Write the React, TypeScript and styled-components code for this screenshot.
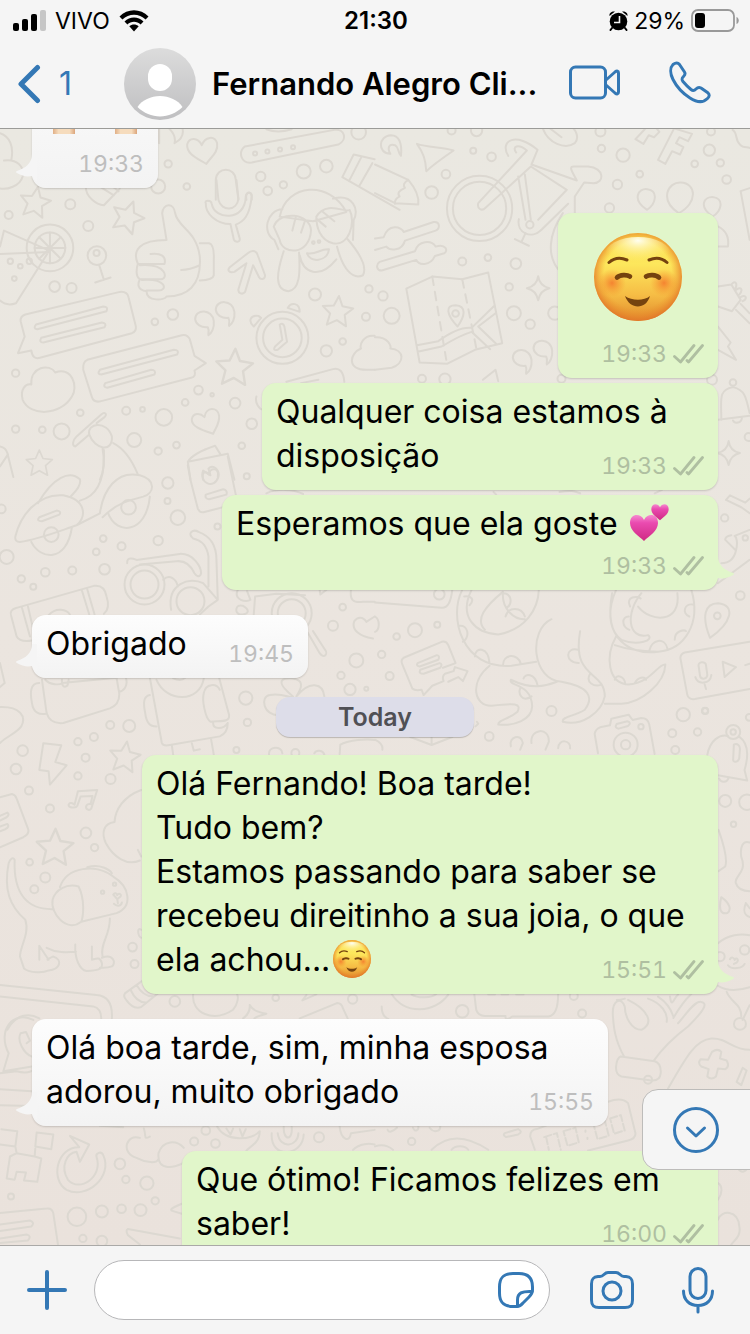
import React from "react";
import styled, { createGlobalStyle, css } from "styled-components";

const BLUE = "#3478b5";
const GREEN = "#e1f6ca";

const GlobalStyle = createGlobalStyle`
  * { box-sizing: border-box; }
  body {
    margin: 0;
    background: #f5f5f5;
    font-family: Inter, "Liberation Sans", sans-serif;
    color: #000;
  }
  button {
    margin: 0;
    padding: 0;
    border: 0;
    background: none;
    color: inherit;
    font: inherit;
    cursor: pointer;
  }
  svg { display: block; }
`;

const Screen = styled.div`
  display: flex;
  flex-direction: column;
  height: 100vh;
  overflow: hidden;
`;

/* ---------- top bars ---------- */

const Header = styled.header`
  flex: none;
  background: #f5f5f5;
  border-bottom: 1px solid #9b9b98;
`;

const StatusBar = styled.div`
  display: grid;
  grid-template-columns: 1fr auto 1fr;
  align-items: center;
  height: 40px;
  padding: 1px 11px 0 13px;
  font-size: 23px;
  line-height: 24px;
`;

const StatusGroup = styled.div<{ $end?: boolean }>`
  display: flex;
  align-items: center;
  justify-content: ${(p) => (p.$end ? "flex-end" : "flex-start")};
  gap: ${(p) => (p.$end ? "6px" : "9px")};
`;

const Clock = styled.time`
  font-size: 24px;
  font-weight: 600;
`;

const NavBar = styled.div`
  display: flex;
  align-items: center;
  height: 88px;
  padding: 0 39px 0 17px;
`;

const BackButton = styled.button`
  display: flex;
  align-items: center;
  gap: 17px;
  width: 107px;
  color: ${BLUE};
  font-size: 32px;
  line-height: 40px;
`;

const ContactName = styled.h1`
  flex: 1;
  min-width: 0;
  margin: 0 16px;
  overflow: hidden;
  white-space: nowrap;
  font-size: 31px;
  font-weight: 600;
  line-height: 40px;
`;

const IconButton = styled.button<{ $gap?: number }>`
  flex: none;
  margin-left: ${(p) => p.$gap ?? 0}px;
  color: ${BLUE};
`;

/* ---------- conversation ---------- */

const Chat = styled.main`
  position: relative;
  flex: 1;
  min-height: 0;
  overflow: hidden;
  background: linear-gradient(#eae8e1, #ebe5df 45%, #eae2dc);
`;

const WallpaperSvg = styled.svg`
  position: absolute;
  inset: 0;
  width: 100%;
  height: 100%;
  fill: none;
  stroke: #dcd8d1;
  stroke-width: 6;
  stroke-linecap: round;
  stroke-linejoin: round;
`;

const MessageList = styled.div`
  position: relative;
  display: flex;
  flex-direction: column;
  margin-top: -106px;
  padding: 0 32px;
`;

const Bubble = styled.article<{ $out?: boolean; $width: number; $gap?: number }>`
  position: relative;
  display: flex;
  flex-direction: column;
  flex: none;
  align-self: ${(p) => (p.$out ? "flex-end" : "flex-start")};
  width: ${(p) => p.$width}px;
  max-width: 100%;
  margin-top: ${(p) => p.$gap ?? 0}px;
  padding: 7px 14px 12px;
  border-radius: 14px;
  box-shadow: 0 1px 2px rgba(0, 0, 0, 0.16);
  ${(p) =>
    p.$out
      ? css`
          background: ${GREEN};
          --meta: #afbfa1;
        `
      : css`
          background: linear-gradient(#fdfdfd, #f3f3f3);
          --meta: #bebebe;
        `}
`;

const Line = styled.p`
  margin: 0;
  font-size: 32px;
  line-height: 44px;

  svg {
    display: inline-block;
    margin: -4px 0 -4px 3px;
    vertical-align: -3px;
  }
`;

const LastRow = styled.div`
  display: flex;
  align-items: flex-end;
  justify-content: space-between;
`;

const BigEmoji = styled.div`
  display: flex;
  justify-content: center;
  height: 114px;
  padding-top: 13px;
`;

const Meta = styled.footer<{ $below?: boolean }>`
  display: flex;
  align-items: center;
  align-self: flex-end;
  gap: 6px;
  margin-top: ${(p) => (p.$below ? 8 : 0)}px;
  color: var(--meta);
  font-size: 23px;
  font-variant-numeric: tabular-nums;
  line-height: 24px;
`;

const TailSvg = styled.svg<{ $out?: boolean }>`
  position: absolute;
  bottom: 6px;
  ${(p) =>
    p.$out
      ? css`
          right: -17px;
          fill: ${GREEN};
        `
      : css`
          left: -17px;
          fill: #f5f5f5;
          transform: scaleX(-1);
        `}
`;

const DatePill = styled.div`
  flex: none;
  align-self: center;
  width: 198px;
  margin: 19px 0 18px;
  border-radius: 14px;
  background: #dddde9;
  box-shadow: 0 1px 1px rgba(0, 0, 0, 0.2);
  color: #505055;
  font-size: 25px;
  font-weight: 600;
  line-height: 40px;
  text-align: center;
`;

const JumpButton = styled.button`
  position: absolute;
  right: -1px;
  bottom: 75px;
  display: flex;
  align-items: center;
  width: 109px;
  height: 81px;
  padding-left: 29px;
  border: 1px solid #bdbcba;
  border-radius: 16px 0 0 16px;
  background: #f5f5f5;
  color: ${BLUE};
`;

/* ---------- composer ---------- */

const Composer = styled.form`
  display: flex;
  flex: none;
  align-items: center;
  height: 89px;
  padding: 0 35px 0 26px;
  border-top: 1px solid #aaa9a7;
  background: #f5f5f5;
`;

const Field = styled.div`
  display: flex;
  flex: 1;
  align-items: center;
  min-width: 0;
  height: 60px;
  margin-left: 26px;
  padding: 0 14px 0 28px;
  border: 1px solid #b7b7b9;
  border-radius: 30px;
  background: #fff;
`;

const MessageInput = styled.input`
  flex: 1;
  min-width: 0;
  height: 44px;
  padding: 0;
  border: 0;
  outline: 0;
  background: transparent;
  font: 32px Inter, "Liberation Sans", sans-serif;
`;

/* ---------- icons ---------- */

const stroke = (w: number) => ({
  fill: "none",
  stroke: "currentColor",
  strokeWidth: w,
  strokeLinecap: "round" as const,
  strokeLinejoin: "round" as const,
});

const SignalIcon = () => (
  <svg width="33" height="21" viewBox="0 0 33 21" aria-label="Signal">
    <rect x="0" y="13" width="6" height="8" rx="2" />
    <rect x="9" y="9" width="6" height="12" rx="2" />
    <rect x="18" y="4" width="6" height="17" rx="2" />
    <rect x="27" y="0" width="6" height="21" rx="2" fill="#c6c6c6" />
  </svg>
);

const WifiIcon = () => (
  <svg width="30" height="22" viewBox="0 0 30 22" aria-label="Wi-Fi">
    <path d="M0.5 6.5C8.5-1.8 21.500-1.800 29.500 6.500L26.600 9.500C20.200 3 9.800 3 3.400 9.500Z" />
    <path d="M5.500 11.500C10.800 6.200 19.200 6.200 24.500 11.500L21.600 14.400C18 10.800 12 10.800 8.400 14.400Z" />
    <path d="M10.300 16.300C13 13.900 17 13.900 19.700 16.300L15 21.500Z" />
  </svg>
);

const AlarmIcon = () => (
  <svg width="19" height="20" viewBox="0 0 19 20" aria-label="Alarm">
    <path d="M3 17L1.500 19M16 17L17.500 19" {...stroke(2)} />
    <circle cx="9.500" cy="10.500" r="8.800" />
    <path d="M0.500 5C0 1.500 3 0 6 0.500ZM18.500 5C19 1.500 16 0 13 0.500Z" />
    <path d="M10.500 5V11.500H5" fill="none" stroke="#f5f5f5" strokeWidth="1.600" />
  </svg>
);

const BatteryIcon = () => (
  <svg width="48" height="23" viewBox="0 0 48 23" aria-label="Battery">
    <rect x="1" y="1" width="42" height="21" rx="6" fill="none" stroke="#999" strokeWidth="1.800" />
    <rect x="4" y="4" width="10" height="15" rx="3" />
    <path d="M45.500 8C48.500 9 48.500 14 45.500 15Z" fill="#999" />
  </svg>
);

const BackIcon = () => (
  <svg width="25" height="40" viewBox="0 0 25 40">
    <path d="M20.500 3.500L4 20L20.500 36.500" {...stroke(5)} />
  </svg>
);

const Avatar = () => (
  <svg width="72" height="72" viewBox="0 0 72 72" role="img" aria-label="Contact picture">
    <defs>
      <linearGradient id="avatar" x1="0" y1="0" x2="0" y2="1">
        <stop offset="0" stopColor="#dcdcdc" />
        <stop offset="1" stopColor="#bfbfc1" />
      </linearGradient>
    </defs>
    <circle cx="36" cy="36" r="36" fill="url(#avatar)" />
    <rect x="24" y="16" width="24" height="27" rx="12" fill="#fff" />
    <path d="M13.500 59C18 52 27 48 36 48C45 48 54 52 58.500 59C46 71.500 26 71.500 13.500 59Z" fill="#fff" />
  </svg>
);

const VideoIcon = () => (
  <svg width="52" height="38" viewBox="0 0 52 38">
    <g {...stroke(3)}>
      <rect x="1.500" y="2" width="35" height="31" rx="5" />
      <path d="M37 15L46 7C48 5.500 49.500 6 49.500 8V27C49.500 29 48 29.500 46 28L37 20" />
    </g>
  </svg>
);

const PhoneIcon = () => (
  <svg width="42" height="46" viewBox="0 0 42 46">
    <path
      d="M4 3.500C6 2 8.500 1 10.500 3.500L15.500 11C16.500 12.500 16 14 14.500 15.500C12.500 17.500 12.500 18.500 14 20.500C16.500 23.500 19 26 22 28.500C24 30 25 30 27 28C28.500 26.500 30 26 32 27L38.500 31.500C41 33.500 40.500 35.500 38.500 37.500C34.500 41.500 28 41.500 21 37C14 32.500 7.500 25.500 4 18.500C1 12.500 1 6.500 4 3.500Z"
      {...stroke(3)}
    />
  </svg>
);

const ChecksIcon = () => (
  <svg width="31" height="20" viewBox="0 0 31 20" aria-label="Delivered">
    <path d="M1.500 12.500L7.500 18L21 1.500M14 16.500L15.500 18L29.500 1.500" {...stroke(2.8)} />
  </svg>
);

const JumpIcon = () => (
  <svg width="48" height="48" viewBox="0 0 48 48">
    <g {...stroke(3)}>
      <circle cx="24" cy="24" r="21.500" />
      <path d="M15.500 22L24 30L32.500 22" />
    </g>
  </svg>
);

const PlusIcon = () => (
  <svg width="42" height="42" viewBox="0 0 42 42">
    <path d="M21 3V39M3 21H39" {...stroke(4)} />
  </svg>
);

const StickerIcon = () => (
  <svg width="38" height="38" viewBox="0 0 38 38">
    <g {...stroke(3)}>
      <path d="M20 35.500H16C6 35.500 2.500 31 2.500 22V16C2.500 6 7 2.500 16 2.500H22C31.500 2.500 35.500 7 35.500 16V19C35.500 22 34 24 32 26L26 32C24 34.500 22.500 35.500 20 35.500Z" />
      <path d="M35 20.500C25 20 20.500 22 20.500 29V35" />
    </g>
  </svg>
);

const CameraIcon = () => (
  <svg width="46" height="40" viewBox="0 0 46 40">
    <g {...stroke(3)}>
      <path d="M9 6.500H11C15 6.500 15 2.500 19 2.500H27C31 2.500 31 6.500 35 6.500H37C42 7 43.500 9 43.500 14V30C43.500 35.500 41.500 37.500 36 37.500H10C4.500 37.500 2.500 35.500 2.500 30V14C2.500 9 4 7 9 6.500Z" />
      <circle cx="23" cy="21" r="9" />
    </g>
  </svg>
);

const MicIcon = () => (
  <svg width="34" height="48" viewBox="0 0 34 48">
    <g {...stroke(3)}>
      <rect x="9" y="2.500" width="16" height="30" rx="8" />
      <path d="M2.500 25C2.500 34 8.500 39.500 17 39.500C25.500 39.500 31.500 34 31.500 25M17 40V46" />
    </g>
  </svg>
);

const Tail = ({ out }: { out?: boolean }) => (
  <TailSvg $out={out} width="22" height="28" viewBox="0 0 22 28">
    <path d="M0 0H5C5 9 11 14 20 17Q22 18 20 19C15 22 10 23 5 22L0 28Z" />
  </TailSvg>
);

const BlushEmoji = ({ size, id }: { size: number; id: string }) => (
  <svg width={size} height={size} viewBox="0 0 88 88" role="img" aria-label="Smiling face">
    <defs>
      <linearGradient id={`${id}-base`} x1="0" y1="0" x2="0" y2="1">
        <stop offset="0" stopColor="#fbdc4e" />
        <stop offset="0.350" stopColor="#fde75c" />
        <stop offset="0.700" stopColor="#f6bd45" />
        <stop offset="1" stopColor="#e08a2c" />
      </linearGradient>
      <radialGradient id={`${id}-rim`} cx="0.500" cy="0.480" r="0.520">
        <stop offset="0.740" stopColor="#ee962c" stopOpacity="0" />
        <stop offset="1" stopColor="#e2762a" stopOpacity="0.900" />
      </radialGradient>
      <radialGradient id={`${id}-shine`} cx="0.500" cy="0.100" r="0.600">
        <stop offset="0" stopColor="#fffef0" />
        <stop offset="1" stopColor="#fff27a" stopOpacity="0" />
      </radialGradient>
      <radialGradient id={`${id}-cheek`}>
        <stop offset="0" stopColor="#f4772c" stopOpacity="0.850" />
        <stop offset="1" stopColor="#f4932c" stopOpacity="0" />
      </radialGradient>
    </defs>
    <circle cx="44" cy="44" r="44" fill={`url(#${id}-base)`} />
    <circle cx="44" cy="44" r="44" fill={`url(#${id}-rim)`} />
    <ellipse cx="44" cy="22" rx="33" ry="18" fill={`url(#${id}-shine)`} />
    <circle cx="18" cy="50" r="14" fill={`url(#${id}-cheek)`} />
    <circle cx="70" cy="50" r="14" fill={`url(#${id}-cheek)`} />
    <g fill="none" stroke="#75430f" strokeLinecap="round">
      <path d="M15 29.500C20 25 27 24.500 33 27M73 29.500C68 25 61 24.500 55 27" strokeWidth="3" />
      <path d="M23 44.500C26 41.500 33 41.500 36 43.500M65 44.500C62 41.500 55 41.500 52 43.500" strokeWidth="4.600" />
    </g>
    <path d="M31 63C38 68 50 68 56 63C52 77 36 77 31 63Z" fill="#75430f" />
  </svg>
);

const HEART = "M0 -6C-3 -13 -14 -13 -14 -3C-14 5 -5 10 0 15C5 10 14 5 14 -3C14 -13 3 -13 0 -6Z";

const HeartsEmoji = () => (
  <svg width="40" height="40" viewBox="0 0 40 40" role="img" aria-label="Two hearts">
    <defs>
      <linearGradient id="heart" x1="0" y1="0" x2="0" y2="1">
        <stop offset="0" stopColor="#f58bd0" />
        <stop offset="0.300" stopColor="#ea4bb0" />
        <stop offset="1" stopColor="#cf2a83" />
      </linearGradient>
    </defs>
    <path d={HEART} transform="translate(14 24)" fill="url(#heart)" />
    <path d={HEART} transform="translate(30 9) scale(0.620)" fill="url(#heart)" />
  </svg>
);

const HandsEmoji = () => (
  <svg width="88" height="91" viewBox="0 0 88 91" role="img" aria-label="Raised hands">
    <defs>
      <linearGradient id="skin" x1="0" x2="1">
        <stop offset="0" stopColor="#e0af86" />
        <stop offset="0.250" stopColor="#f6dcbd" />
        <stop offset="0.750" stopColor="#f6dcbd" />
        <stop offset="1" stopColor="#dba57b" />
      </linearGradient>
    </defs>
    <path d="M2 20Q6 8 13 12Q22 8 24 20V91H2Z" fill="url(#skin)" />
    <path d="M86 20Q82 8 75 12Q66 8 64 20V91H86Z" fill="url(#skin)" />
  </svg>
);

/* ---------- wallpaper doodles ---------- */

type Dot = [number, number, number];

const Dots = ({ at }: { at: Dot[] }) => (
  <>
    {at.map(([x, y, r], i) => (
      <circle key={i} cx={x} cy={y} r={r} />
    ))}
  </>
);

const Star = ({ x, y, s = 1, r = 0 }: { x: number; y: number; s?: number; r?: number }) => (
  <path
    transform={`translate(${x} ${y}) rotate(${r}) scale(${s})`}
    d="M0 -46L13 -16L46 -12L22 9L29 43L0 27L-29 43L-22 9L-46 -12L-13 -16Z"
  />
);

const Sparkle = ({ x, y }: { x: number; y: number }) => (
  <path transform={`translate(${x} ${y})`} d="M0 -36Q4 -6 34 0Q6 6 0 36Q-6 6 -34 0Q-4 -6 0 -36Z" />
);

const Quotes = ({ x, y }: { x: number; y: number }) => (
  <g transform={`translate(${x} ${y})`}>
    <path d="M12 28C-8 30 -24 20 -26 4C-26 -28 26 -28 30 10C32 30 24 46 14 52C12 46 18 40 12 28Z" />
    <path d="M74 0C54 2 38 -8 36 -24C36 -56 88 -56 92 -18C94 2 86 18 76 24C74 18 80 12 74 0Z" />
  </g>
);

const Note = ({ x, y }: { x: number; y: number }) => (
  <path
    transform={`translate(${x} ${y})`}
    d="M-16 16L-6 -24L52 -28L34 28C28 36 14 30 20 18C24 12 34 16 32 14L38 -10L2 -8L-8 20C-12 28 -36 26 -34 16C-30 8 -22 12 -16 16Z"
  />
);

const Region = ({ x, y, children }: { x: number; y: number; children: React.ReactNode }) => (
  <g transform={`translate(${x} ${y}) scale(0.333)`}>{children}</g>
);

const Wallpaper = () => (
  <WallpaperSvg viewBox="0 129 750 1116" preserveAspectRatio="xMidYMin slice" aria-hidden="true">
    {/* heart, remote and pencil */}
    <Region x={0} y={0}>
      <Dots
        at={[[505, 492, 11], [475, 560, 21], [561, 560, 10], [783, 530, 14], [851, 555, 11], [804, 573, 13], [912, 515, 21], [980, 499, 19], [1077, 397, 22], [766, 461, 6], [803, 455, 6], [841, 449, 6], [880, 442, 6]]}
      />
      <path d="M0 400C30 410 42 440 34 480M12 482C50 476 74 500 68 530C60 560 20 570 0 566" />
      <path d="M508 386C524 402 528 416 524 430C546 418 552 402 548 386M478 386V430" />
      <path d="M620 492C594 476 560 464 562 434C568 412 594 412 606 436C616 410 644 406 652 430C656 458 634 470 620 492Z" />
      <path d="M735 440L1004 390C1036 386 1044 420 1016 434L756 488C724 492 714 458 735 440Z" />
      <path d="M648 600V540C650 500 706 500 708 540L716 600M740 600C736 576 752 570 756 590V600" />
      <path d="M1125 478L1062 464L1028 532L1200 630M1084 474L1048 544M1118 490L1078 560M800 388C820 396 850 396 876 388" />
    </Region>

    {/* bicycle, keys and balloons */}
    <Region x={375} y={0}>
      <Dots
        at={[[230, 392, 12], [305, 392, 17], [295, 453, 9], [350, 471, 13], [213, 523, 13], [170, 578, 19], [677, 395, 15], [680, 446, 11], [745, 466, 20], [795, 523, 10], [728, 554, 14], [1009, 395, 12], [1004, 451, 17], [960, 492, 10], [1037, 489, 11], [1056, 539, 13]]}
      />
      <path d="M78 468C82 430 72 406 48 406C10 408 6 460 46 462C36 444 42 430 60 436C74 444 66 454 78 468Z" />
      <path d="M126 432C160 444 200 440 236 452C204 474 178 492 154 514C152 480 146 460 126 432Z" />
      <path d="M0 494L100 540Q134 580 130 614L60 610L0 580M100 540Q80 552 90 564Q62 576 74 590Q58 598 60 612" />
      <path d="M400 468C372 420 426 396 488 450L470 494L606 542C590 512 580 498 600 500H640C690 504 690 550 656 550L628 548L600 590L600 640M424 458C410 440 430 430 456 452L310 610C306 626 320 636 332 624L468 500L576 570L490 660M430 530L452 660M450 524L468 660" />
      <circle cx="314" cy="626" r="98" />
      <circle cx="314" cy="626" r="80" />
      <path d="M432 658C424 700 470 720 500 690L580 612M452 700L440 726M420 718L462 738M564 640C524 700 510 770 560 820" />
      <circle cx="465" cy="675" r="11" />
      <path d="M504 386C520 430 570 450 600 430C616 412 600 390 596 386M526 386L560 412" />
      <path d="M782 418L812 386M782 418L806 432L822 406L838 412L854 396L846 386M896 390L850 480L872 492L892 454L916 464L926 442L904 430L914 412L940 424L952 402L900 386M1074 390C1090 400 1080 420 1096 434C1106 446 1118 440 1125 444" />
      <path d="M817 630C770 600 790 564 818 568C850 572 846 610 817 630ZM912 640C852 600 880 546 918 548C966 550 970 610 912 640ZM1014 650C970 620 988 590 1016 592C1050 598 1040 634 1014 650ZM1125 565L1098 574L1125 720" />
      <path d="M1030 680C1050 690 1064 710 1060 740H1030" />
    </Region>

    {/* drink, thumb, see-no-evil monkey, speech cards, alarm clock */}
    <Region x={0} y={180}>
      <Dots
        at={[[26, 105, 12], [211, 73, 15], [265, 138, 15], [291, 227, 28], [290, 219, 9], [31, 244, 8], [61, 259, 7], [88, 244, 8], [43, 296, 7], [164, 320, 16], [215, 324, 15], [519, 404, 16], [465, 426, 10], [47, 580, 11], [241, 699, 10], [379, 693, 12], [428, 689, 7], [492, 713, 25], [556, 668, 10], [596, 631, 13], [637, 645, 5], [706, 670, 16], [756, 732, 16], [475, 814, 11], [530, 796, 10], [403, 781, 21], [185, 755, 24], [127, 750, 10], [47, 748, 11], [726, 798, 10], [741, 890, 9], [946, 344, 18], [980, 513, 17], [1029, 485, 10], [1099, 411, 12], [1108, 327, 11], [941, 188, 4], [958, 185, 4]]}
      />
      <Star x={106} y={66} r={10} />
      <Star x={384} y={110} r={20} s={1.050} />
      <Star x={1014} y={394} r={5} />
      <Star x={704} y={562} r={3} s={1.200} />
      <Star x={118} y={850} s={0.850} />
      <path d="M258 20C256 50 290 74 312 76L360 26M300 20L342 46M324 8L356 34" />
      <path d="M0 200L12 152L148 212L48 370Q20 380 0 362M0 222L148 216" />
      <circle cx="150" cy="204" r="70" />
      <circle cx="150" cy="204" r="46" />
      <path d="M150 204V158M150 204V250M150 204H104M150 204H196M150 204L118 172M150 204L182 236M150 204L182 172M150 204L118 236M298 256L312 300M286 308L332 293" />
      <path d="M500 180L487 100C490 70 522 66 526 100C534 144 590 150 600 230C606 320 560 350 500 350C496 362 440 366 440 334C410 330 414 310 420 298C406 290 410 264 414 252C396 210 420 180 500 180ZM452 222C484 218 500 230 494 252H414M420 256C504 250 504 298 484 298H420M426 300C500 294 504 332 476 332H440M544 270Q570 270 600 256M600 190H628Q644 194 642 240V286Q640 300 600 302" />
      <path d="M650 0L656 60C666 96 712 94 716 56L710 0M618 70C612 60 634 58 636 72C644 120 736 126 738 50C740 34 758 36 756 48C750 110 730 126 708 134L720 176C722 188 706 188 702 178L692 132C650 132 616 100 618 70Z" />
      <path d="M840 110C860 10 990 0 1040 96L940 124ZM822 140C840 90 930 100 934 150C930 230 846 224 840 180ZM950 110C980 60 1040 100 1050 90C1070 130 1046 200 1000 190C960 180 950 140 950 110ZM848 88C800 90 786 160 824 180L836 208M1000 56C1060 40 1080 90 1062 120L1060 180M852 214C830 280 824 330 866 334C900 330 902 280 898 218M1012 200C1030 270 1060 300 1090 286C1104 260 1080 220 1044 178M900 226C910 280 960 300 1010 238M922 220C950 226 960 206 988 208C984 246 930 250 922 220ZM878 152L888 112M904 158L916 122M950 116L978 140M970 96L1004 124" />
      <path d="M690 262L744 220C760 206 772 216 774 226L796 286C796 300 782 300 778 292L760 256L736 336C728 346 714 340 716 328L740 250L704 276C690 280 680 272 690 262Z" />
      <path d="M76 404L360 336Q382 334 386 352L408 440Q410 454 396 460L120 534Q98 540 94 512L54 520L74 470L62 424Q60 410 76 404ZM108 434L310 380Q326 380 320 394L112 448Q98 446 108 434ZM124 474L306 428Q322 430 314 442L130 488Q116 488 124 474Z" />
      <path d="M262 540L546 466Q562 462 570 478L584 528L618 550L584 572Q590 590 574 594L304 664Q282 670 276 652L250 570Q248 546 262 540ZM300 570L522 510Q540 510 532 524L304 584Q290 584 300 570ZM316 610L454 570Q470 570 464 584L322 624Q308 622 316 610Z" />
      <path d="M94 614C90 560 150 550 166 578C216 560 236 620 216 650C180 710 90 710 68 660C60 630 76 610 94 614Z" />
      <Quotes x={612} y={414} />
      <circle cx="848" cy="474" r="78" />
      <circle cx="848" cy="474" r="58" />
      <path d="M840 434Q850 428 854 440L862 486L834 510Q818 514 826 500L848 480ZM762 440C744 424 752 404 776 408L784 414ZM864 384C874 366 900 368 900 396Z" />
      <path d="M1125 468C1090 464 1080 496 1084 506C1050 520 1040 570 1100 570H1125M860 606L1000 568Q1030 560 1034 606M904 610L956 600M770 650C764 670 780 690 790 690" />
      <path d="M640 762C610 752 574 742 576 718C580 700 600 698 614 712C618 680 654 680 658 708C660 730 650 740 640 762Z" />
      <path d="M268 764L226 800C214 798 220 780 230 770L304 704C314 696 324 702 314 712L290 730M268 764C260 730 320 720 336 770C340 820 284 810 268 764ZM308 806C316 850 310 880 300 900M340 790C380 810 400 850 414 884M564 846L684 822L704 900M564 846Q580 820 646 798L662 824M564 846L572 900M610 900C604 870 624 876 626 884C634 860 660 866 654 890" />
      <path d="M0 800Q18 804 22 820L40 892M0 860L24 824" />
    </Region>

    {/* cloud, wrench, map */}
    <Region x={375} y={180}>
      <Dots
        at={[[262, 245, 12], [339, 233, 10], [423, 251, 16], [403, 321, 11], [417, 400, 21], [466, 433, 14], [540, 400, 20], [24, 348, 14], [50, 408, 24], [242, 401, 10], [141, 597, 12], [210, 598, 17], [560, 597, 12], [704, 84, 14], [1012, 600, 15], [1075, 608, 10], [1122, 772, 12]]}
      />
      <path d="M0 176L26 172C40 130 80 140 86 156L176 126C196 124 196 146 182 152L90 182C80 216 44 212 34 200L0 210" />
      <path d="M14 246L120 214C130 180 170 180 182 200C214 190 220 214 208 220L180 228C166 260 130 256 124 240L20 272C4 272 2 254 14 246Z" />
      <path d="M94 326L172 290L262 298L340 278L382 490L300 510L216 552L134 548ZM126 496L190 484Q250 440 290 444L360 376M128 516L200 500Q260 464 290 456L346 508M310 440L366 494M310 440L362 400" />
      <path d="M172 290L214 540M262 298L304 504" strokeDasharray="26 20" />
      <path d="M248 440C214 404 210 376 242 376C276 378 270 410 248 440Z" />
      <Sparkle x={490} y={325} />
      <Sparkle x={1062} y={820} />
      <Quotes x={440} y={530} />
      <path d="M0 472C40 470 50 500 46 506C90 510 90 550 50 564L0 570M324 600L362 570L370 604" />
      <path d="M1030 320L1070 314L1098 360L1072 394L1030 380M1070 314C1080 300 1090 310 1082 326M1084 330C1100 318 1106 330 1094 344M1098 352C1114 342 1120 356 1104 364M1098 372L1125 400M1084 390L1125 430M1030 440L1068 488L1060 500L1084 540L1030 510" />
      <path d="M1040 720C1040 660 1030 630 1075 622C1110 630 1114 650 1125 700M1030 720L1125 708M1075 722C1080 734 1100 730 1102 714" />
    </Region>

    {/* scooter, glasses, backpack */}
    <Region x={0} y={450}>
      <Dots
        at={[[504, 99, 17], [503, 153, 9], [534, 203, 22], [653, 230, 9], [475, 272, 14], [310, 266, 10], [289, 306, 10], [365, 289, 12], [314, 358, 16], [217, 362, 12], [136, 367, 13], [64, 387, 11], [100, 411, 9], [20, 321, 21], [4, 177, 13], [154, 254, 22], [386, 172, 22], [1029, 472, 10], [1000, 528, 15], [1070, 632, 21], [1024, 677, 11], [1051, 719, 17], [1100, 717, 6], [738, 745, 20], [743, 818, 11], [331, 826, 12], [388, 829, 18], [282, 862, 12], [234, 876, 11]]}
      />
      <path d="M46 260C60 200 110 130 190 136C260 150 260 200 230 226C160 250 110 270 60 276Q44 276 46 260ZM114 160C160 80 210 60 240 88C246 110 220 130 212 140M312 0C316 90 290 140 240 152M230 226L300 190C310 120 350 60 420 76C470 90 464 130 430 140C390 150 350 160 308 202M94 276C120 330 200 340 216 232M324 188C350 260 440 250 450 140M118 202L170 182Q186 184 178 194L126 214Q108 214 118 202Z" />
      <path d="M564 46L572 90L594 176Q600 190 614 186L700 164M684 20L708 134M618 134L670 118Q684 120 680 134L628 148Q614 146 618 134ZM610 62C596 100 644 120 656 80C660 60 640 40 626 56L632 76Z" />
      <circle cx="434" cy="404" r="42" />
      <circle cx="434" cy="404" r="60" />
      <circle cx="572" cy="454" r="42" />
      <path d="M514 480C500 400 570 380 610 400L654 450L626 470L600 494M382 340C380 320 400 326 410 330L540 312C580 310 604 350 604 370C600 384 590 380 584 370C570 340 550 332 530 334L420 344M490 390C510 370 530 390 534 410M626 410V320C620 280 600 270 580 266C560 250 580 236 596 246C640 262 650 300 650 330L654 450" />
      <path d="M34 500Q26 480 50 474L282 408Q314 404 320 440Q332 476 312 492M34 500L50 560Q60 578 96 572M66 474L90 560M84 470L100 540M246 422L268 494M262 418L284 494M146 496C170 470 200 480 210 494" />
      <path d="M126 690L140 790Q150 824 190 820L330 776Q360 764 358 730L350 684M118 700C90 700 90 730 96 760C100 790 120 796 138 792M378 684C386 710 370 724 358 726M136 690C150 706 180 706 186 700L350 684M186 690C184 720 206 716 206 690M0 640L14 700L0 712M0 772C60 770 80 800 64 830C50 850 20 860 0 880" />
      <path d="M450 684L486 880Q490 890 510 886L660 860Q684 850 684 820M658 684L688 796C690 820 660 812 632 816C616 806 606 750 612 730C618 700 650 700 660 720M450 736C430 740 430 760 436 790C440 820 450 830 470 830M470 690C500 760 600 760 612 686M520 686C540 694 550 690 556 684M640 820C640 840 670 840 684 820" />
      <path d="M766 440L830 432L916 436M766 440L762 494M714 420C700 450 740 460 752 450L742 424M730 468C706 460 704 490 720 494C750 494 750 480 730 468M924 548L960 610C974 630 986 610 976 600L940 544M800 130C830 116 880 116 910 132M960 420L962 434L980 420M1054 420C1050 450 1060 460 1090 456H1125M1120 566C1080 560 1054 540 1064 514C1074 500 1090 500 1100 516L1125 500" />
      <circle cx="876" cy="490" r="60" />
      <circle cx="876" cy="490" r="42" />
      <path d="M880 740C820 690 850 684 880 686C910 690 910 710 890 740C930 690 970 700 974 740M840 796C790 800 780 740 810 736C840 730 860 740 880 744" />
    </Region>

    {/* octopus, sticker cards, voice note */}
    <Region x={375} y={450}>
      <Dots
        at={[[120, 541, 21], [187, 525, 9], [65, 560, 10], [20, 614, 11], [44, 679, 12], [193, 433, 16], [530, 784, 15], [343, 860, 13], [1097, 437, 13], [1028, 498, 10], [1050, 204, 11], [1112, 264, 8], [991, 783, 9]]}
      />
      <path d="M262 420C220 500 260 660 410 648L484 636M290 420C250 500 300 550 370 554C450 540 490 480 492 420M384 426C330 470 300 510 330 540M384 426C380 480 420 510 450 508M392 500C400 470 440 470 450 500M384 430C410 430 414 460 396 474M252 528C280 524 286 560 264 576M300 620C300 590 340 590 344 640M384 648C384 610 430 610 438 642M268 440C290 436 300 450 284 466" />
      <path d="M530 508C460 540 470 690 560 696C640 710 660 740 630 780C600 800 560 800 564 816C620 830 680 790 690 740C690 660 590 690 616 544M344 648C280 700 300 770 350 768C420 760 440 760 428 786C400 810 370 810 370 824C420 830 470 810 472 770C470 700 400 710 408 690C470 720 510 710 546 696M446 686C450 670 480 670 488 706M470 740C440 760 430 730 436 716M610 600C570 590 570 640 612 640M646 672C630 700 660 710 676 706" />
      <path d="M724 420C670 540 750 620 850 606C930 600 980 520 950 420M800 430C750 490 760 570 820 556C840 570 790 590 740 570C710 550 700 500 712 430M790 470C830 520 920 520 908 430M724 560C690 620 700 700 760 704C830 700 850 640 872 644C870 700 800 760 740 762H690M720 586C760 600 800 604 850 606M824 602C830 570 870 560 878 596M900 570C900 540 930 540 934 544M954 464C930 460 920 490 944 500M720 690C724 670 750 680 752 704M780 700C790 680 810 680 814 690M764 540C740 530 740 500 762 500M766 470C750 440 790 436 798 446" />
      <path d="M0 458L200 474Q226 476 232 420M0 500C16 510 14 540 0 546M86 624L200 576Q214 572 220 586L242 640L204 654M86 624Q76 630 82 644L112 716Q120 724 140 720L146 736L172 708L206 694Q200 680 210 672L236 664L240 652L278 664L264 694L250 682L220 696M128 640L186 616Q196 618 190 630L134 650Q122 648 128 640ZM136 660L194 640Q204 642 196 654L146 672Q130 672 136 660Z" />
      <path d="M1006 564C980 500 990 460 1030 460C1086 466 1070 520 1006 564ZM1125 576L930 608Q914 614 918 630L938 736Q942 750 960 748L1125 718M1044 636L1050 682L1084 652ZM1112 646L1125 642M972 650C968 634 994 634 994 646L998 676C996 690 978 690 976 678ZM962 682C970 706 1006 704 1010 676M990 704L994 718" />
      <path d="M408 890C400 860 440 850 444 880L436 900M470 880C464 836 524 830 522 876L512 900M550 896C550 866 590 870 586 896" />
      <path d="M1054 150L1066 136L1112 158L1125 146M1054 150L1100 172L1125 190M1052 270L1084 302C1090 280 1086 262 1080 258L1125 240M1052 270Q1050 260 1070 256M1040 340C1070 340 1080 320 1084 302M1030 400L1125 330M356 126L364 134M554 126C590 120 600 124 616 130M840 130L862 120M106 862L170 886L232 862M170 860V886M0 870C20 880 24 890 22 900M306 816L310 822L302 830" />
    </Region>

    {/* camera, bell and drops */}
    <Region x={600} y={710}>
      <Dots
        at={[[250, 14, 20], [316, 3, 9], [217, 70, 12], [293, 66, 11], [226, 120, 12], [400, 66, 8], [400, 66, 21], [376, 273, 18], [441, 277, 23], [401, 343, 8], [77, 104, 36], [77, 104, 14], [123, 50, 8], [448, 22, 10]]}
      />
      <path d="M-6 130L-16 72Q-14 58 0 52L30 46L34 26L86 14L98 30L124 24Q144 24 148 44L164 132M50 42L82 34Q96 38 84 48L56 56Q42 54 50 42Z" />
      <path d="M322 136C330 90 360 72 384 78M418 80C446 100 446 140 434 180L442 212L354 196M358 206C364 220 382 218 386 204M402 104C412 98 422 108 420 120L418 146C412 160 398 158 400 146Z" />
      <path d="M356 360C370 400 384 450 376 470L356 484M450 398C430 390 420 410 424 440C444 490 400 500 408 520C414 540 430 544 450 544M364 562C390 580 396 600 382 610C362 614 356 600 364 562ZM438 580L450 596M438 580C430 600 430 614 450 622" />
    </Region>

    {/* lightning, note, puppy */}
    <Region x={0} y={730}>
      <Dots
        at={[[68, 62, 16], [48, 117, 16], [257, 83, 12], [234, 138, 11], [332, 147, 15], [87, 182, 12], [150, 236, 12], [258, 309, 16], [284, 353, 11], [89, 397, 10], [136, 443, 15], [103, 478, 12], [398, 652, 13], [404, 703, 12], [525, 815, 16], [710, 60, 9], [887, 69, 12], [828, 804, 10], [1059, 808, 14], [308, 487, 5], [344, 463, 5]]}
      />
      <path d="M130 40L184 46L166 96L200 106L150 164L146 124L118 120Z" />
      <Star x={375} y={80} r={8} />
      <Star x={165} y={352} r={2} s={1.200} />
      <Note x={240} y={208} />
      <path d="M0 202L36 192Q46 194 50 206L84 296Q90 312 70 322L0 352M0 258L22 248Q30 254 20 262L0 272M0 290L22 282Q30 290 16 298L0 304" />
      <path d="M424 180C370 200 346 240 344 276C310 280 304 310 318 340C340 380 380 410 420 392M424 600C410 590 414 620 424 624M414 360L424 380" />
      <path d="M160 538C80 540 40 490 44 390C40 380 30 386 26 400C10 480 30 530 76 570C90 610 60 650 60 680L72 716C90 730 130 730 146 722C180 720 190 690 160 680C140 690 140 690 146 690L118 648V690M140 654C170 670 200 668 228 666M226 644C224 690 240 720 260 724C290 722 310 720 306 700C300 680 290 686 276 690V650M306 684C340 670 350 700 336 710C320 716 310 714 300 714M330 566C330 620 300 640 308 680" />
      <path d="M180 472C200 410 290 400 340 440C390 470 400 530 350 550L244 576C200 610 150 550 158 510C166 480 200 460 236 470C256 510 250 560 244 576M262 412C300 400 330 420 336 430M340 494C344 488 350 490 352 496C358 488 366 494 362 500L352 508ZM352 508L354 520M342 522C350 530 364 530 366 518" />
      <path d="M0 766L290 796Q340 800 336 866M0 800L280 830Q304 836 304 866M22 900C50 850 90 850 118 866M376 790L426 754M376 790Q368 800 380 812Q400 840 424 832L476 790M392 780Q410 820 440 818M410 766Q430 800 458 800" />
      <path d="M580 794C574 850 640 880 700 840C716 820 716 800 712 794M950 794L908 812L920 796M750 826Q760 846 800 852Q770 860 764 866M730 866Q752 850 750 826M900 866L1012 820Q1026 820 1030 836L1044 866M1020 72L1022 44C1050 30 1100 26 1125 30M516 46L520 74M634 28L642 74M576 40L582 62L600 58M808 74C804 48 846 46 848 70M944 70C950 58 970 60 974 74" />
    </Region>

    {/* cat, hand, game pad, digital clock */}
    <Region x={375} y={900}>
      <Dots at={[[262, 334, 19], [597, 288, 12], [622, 341, 12], [1110, 150, 14], [1036, 170, 14], [110, 725, 11], [1096, 372, 18], [820, 540, 12]]} />
      <path d="M1030 130C1060 104 1100 100 1125 106M1030 258C1060 276 1100 270 1125 262M1066 178C1070 170 1078 172 1080 180C1086 170 1094 180 1086 188L1078 192M1060 196C1070 210 1104 206 1110 192M1056 276C1070 310 1100 310 1100 350M1125 316L1104 360" />
      <path d="M748 470C720 420 716 380 714 340C714 300 740 290 750 320C750 350 770 390 800 390C840 370 820 330 760 300M836 484C860 450 900 410 940 380C990 330 1000 310 980 306C960 300 930 350 910 370M750 296C740 300 730 300 726 300M820 296C860 310 880 340 876 366M850 290C880 310 890 330 896 350M886 290C890 330 900 290 910 284M896 354C910 330 930 300 950 282M738 470L840 484Q860 490 858 520Q856 544 830 542L740 530Q722 524 724 500Q726 474 738 470Z" />
      <path d="M880 566C930 480 960 420 1010 416C1060 414 1070 450 1125 450M1012 456Q1030 444 1040 456L1036 476L1056 482Q1066 500 1052 508L1030 506L1024 530Q1010 542 998 530L1002 508L980 500Q968 490 978 478L1000 480ZM1104 504L1116 512L1100 556L1086 546Z" />
      <path d="M298 282L304 330Q310 348 330 348H392Q390 366 412 350H520Q550 346 550 282M340 284H360M380 284H400M424 284H446M50 282C90 346 180 340 220 284M110 284C130 296 170 294 184 282M20 320Q20 350 40 357" />
      <path d="M480 750L466 710Q466 690 486 688L700 606Q740 590 760 610L782 700Q784 716 760 722L640 752M390 700L430 688Q446 696 430 704L394 712Q382 706 390 700ZM0 740Q30 730 54 750M170 750C220 700 280 710 340 750M230 750C240 736 270 736 280 750M38 690Q44 704 66 684M114 684C120 700 132 690 130 680M164 684C176 700 196 696 196 680" />
      <path d="M508 712L546 700L558 750M514 712L522 750M566 694L602 684L612 728L578 738ZM656 672L690 662L702 708L668 718ZM706 656L738 646L750 692L718 702ZM632 692V696M638 714V718" strokeDasharray="22 8" />
      <path d="M1030 850C1044 858 1044 880 1030 900M1030 960C1040 930 1090 930 1094 980C1100 1010 1080 1020 1070 1035M1090 806Q1104 826 1118 806" />
    </Region>

    {/* chat logo, robot, refresh, saucer */}
    <Region x={0} y={1000}>
      <Dots
        at={[[33, 590, 9], [360, 492, 16], [378, 539, 11], [441, 550, 20], [466, 603, 11], [365, 627, 13], [422, 631, 18], [306, 635, 18], [231, 651, 28], [249, 716, 11], [306, 724, 16], [618, 392, 13], [583, 425, 12], [647, 431, 13], [958, 412, 15]]}
      />
      <path d="M0 220L50 214C110 230 120 180 98 206M100 60C40 30 -10 90 26 160L10 214L60 206L96 200M62 100C50 120 70 160 96 170M62 100L78 96L90 122L80 130M0 268L96 274M0 316L96 318M300 378L370 382" />
      <path d="M4 388L52 394L46 440L0 434M110 398L160 404L154 448L106 440ZM46 440L50 460L30 470L20 536L44 540L50 516L78 518L72 542L112 546L124 476L104 470L106 446M50 460L104 470" />
      <path d="M238 442C170 440 150 540 200 570C260 600 340 530 310 466C304 452 286 460 290 472C310 530 240 580 204 540C180 500 200 460 230 456L240 486L268 434L210 408Z" />
      <path d="M432 386C440 410 430 420 450 410M420 414C380 400 360 460 410 474C440 490 470 490 474 480M476 460C470 520 530 500 550 490M476 460C490 420 530 420 552 444M652 380C680 430 760 420 780 394C780 430 750 440 740 452M680 386L692 404L700 386M720 388L728 410L738 388M816 400C810 480 910 470 912 404M834 400C840 450 896 440 896 400M852 380C850 424 880 424 876 380M1020 380C1024 420 1050 430 1054 400L1125 390M1060 450C1080 430 1110 430 1125 434" />
      <path d="M0 640L140 626Q156 624 160 640L174 734M0 674L90 662Q106 668 94 680L0 694M0 716L80 704Q96 708 84 722L0 730M384 688L540 716M384 688Q376 690 384 706L420 734M546 612Q500 630 520 634L546 642" />
    </Region>
  </WallpaperSvg>
);

/* ---------- messages ---------- */

const Stamp = ({ time, out, below }: { time: string; out?: boolean; below?: boolean }) => (
  <Meta $below={below}>
    <time>{time}</time>
    {out && <ChecksIcon />}
  </Meta>
);

export default function App() {
  return (
    <>
      <GlobalStyle />
      <Screen>
        <Header>
          <StatusBar>
            <StatusGroup>
              <SignalIcon />
              <span>VIVO</span>
              <WifiIcon />
            </StatusGroup>
            <Clock>21:30</Clock>
            <StatusGroup $end>
              <AlarmIcon />
              <span>29%</span>
              <BatteryIcon />
            </StatusGroup>
          </StatusBar>
          <NavBar>
            <BackButton type="button" aria-label="Back, 1 unread chat">
              <BackIcon />
              <span>1</span>
            </BackButton>
            <Avatar />
            <ContactName>Fernando Alegro Cli...</ContactName>
            <IconButton type="button" aria-label="Video call">
              <VideoIcon />
            </IconButton>
            <IconButton type="button" aria-label="Voice call" $gap={48}>
              <PhoneIcon />
            </IconButton>
          </NavBar>
        </Header>

        <Chat>
          <Wallpaper />
          <MessageList>
            <Bubble $width={126}>
              <BigEmoji>
                <HandsEmoji />
              </BigEmoji>
              <Stamp time="19:33" below />
              <Tail />
            </Bubble>
            <Bubble $out $width={160} $gap={25}>
              <BigEmoji>
                <BlushEmoji size={88} id="big" />
              </BigEmoji>
              <Stamp time="19:33" out below />
            </Bubble>
            <Bubble $out $width={456} $gap={5}>
              <Line>Qualquer coisa estamos à</Line>
              <LastRow>
                <Line>disposição</Line>
                <Stamp time="19:33" out />
              </LastRow>
            </Bubble>
            <Bubble $out $width={496} $gap={5}>
              <Line>
                Esperamos que ela goste <HeartsEmoji />
              </Line>
              <Stamp time="19:33" out below />
              <Tail out />
            </Bubble>
            <Bubble $width={276} $gap={25}>
              <LastRow>
                <Line>Obrigado</Line>
                <Stamp time="19:45" />
              </LastRow>
              <Tail />
            </Bubble>
            <DatePill>Today</DatePill>
            <Bubble $out $width={576}>
              <Line>Olá Fernando! Boa tarde!</Line>
              <Line>Tudo bem?</Line>
              <Line>Estamos passando para saber se</Line>
              <Line>recebeu direitinho a sua joia, o que</Line>
              <LastRow>
                <Line>
                  ela achou...
                  <BlushEmoji size={38} id="small" />
                </Line>
                <Stamp time="15:51" out />
              </LastRow>
              <Tail out />
            </Bubble>
            <Bubble $width={576} $gap={25}>
              <Line>Olá boa tarde, sim, minha esposa</Line>
              <LastRow>
                <Line>adorou, muito obrigado</Line>
                <Stamp time="15:55" />
              </LastRow>
              <Tail />
            </Bubble>
            <Bubble $out $width={536} $gap={25}>
              <Line>Que ótimo! Ficamos felizes em</Line>
              <LastRow>
                <Line>saber!</Line>
                <Stamp time="16:00" out />
              </LastRow>
            </Bubble>
          </MessageList>
          <JumpButton type="button" aria-label="Scroll to latest message">
            <JumpIcon />
          </JumpButton>
        </Chat>

        <Composer onSubmit={(e) => e.preventDefault()}>
          <IconButton type="button" aria-label="Attach">
            <PlusIcon />
          </IconButton>
          <Field>
            <MessageInput type="text" aria-label="Message" />
            <IconButton type="button" aria-label="Stickers">
              <StickerIcon />
            </IconButton>
          </Field>
          <IconButton type="button" aria-label="Camera" $gap={39}>
            <CameraIcon />
          </IconButton>
          <IconButton type="button" aria-label="Record voice message" $gap={46}>
            <MicIcon />
          </IconButton>
        </Composer>
      </Screen>
    </>
  );
}
